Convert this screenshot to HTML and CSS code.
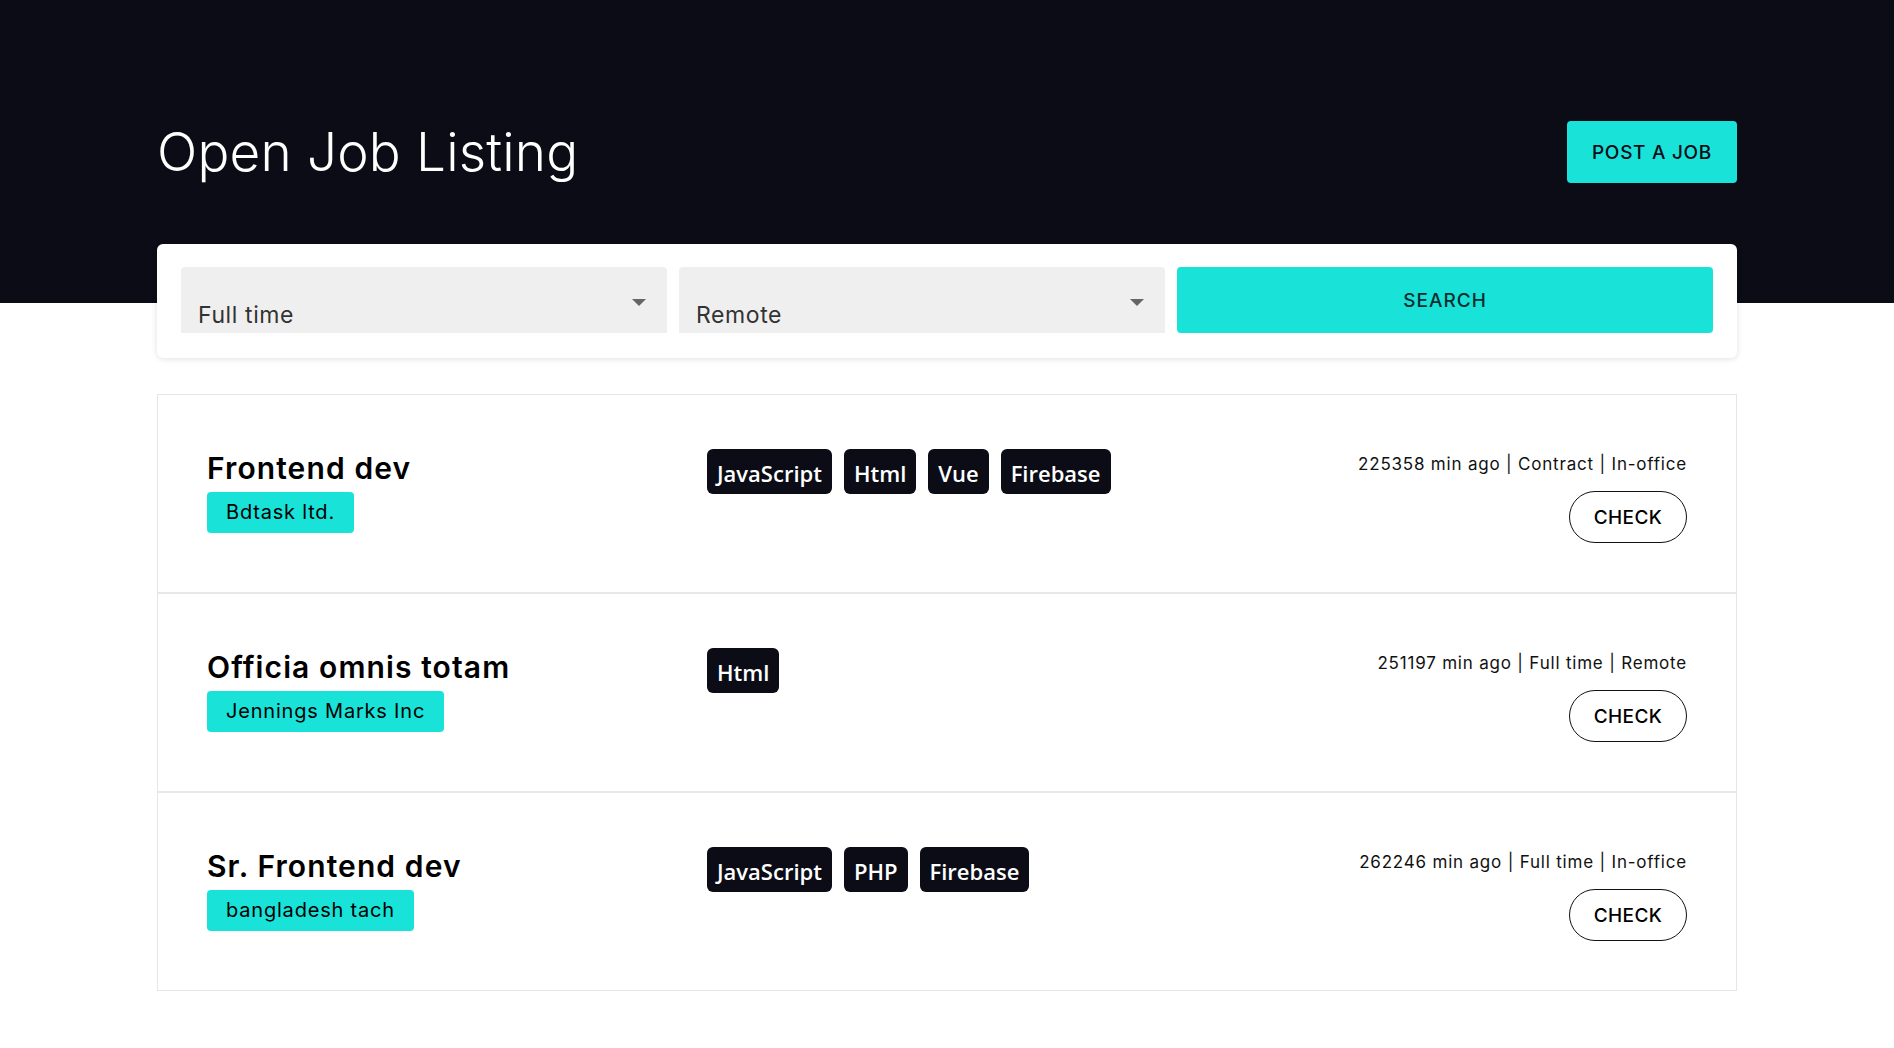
FILE: index.html
```html
<!DOCTYPE html>
<html>
<head>
<meta charset="utf-8">
<link rel="stylesheet" href="styles.css">
</head>
<body>
<div class="page">
  <div class="container">
    <header class="top">
      <h1 class="title">Open Job Listing</h1>
      <button class="post-btn">POST A JOB</button>
    </header>
    <section class="filters">
      <div class="select"><span>Full time</span><i class="caret"></i></div>
      <div class="select"><span>Remote</span><i class="caret"></i></div>
      <button class="search-btn">SEARCH</button>
    </section>
    <section class="list">
      <div class="row">
        <div class="info">
          <div class="job-title">Frontend dev</div>
          <div class="company">Bdtask ltd.</div>
        </div>
        <div class="skills">
          <span class="skill">JavaScript</span><span class="skill">Html</span><span class="skill">Vue</span><span class="skill">Firebase</span>
        </div>
        <div class="meta">
          <div class="meta-text">225358 min ago | Contract | In-office</div>
          <button class="check">CHECK</button>
        </div>
      </div>
      <div class="row">
        <div class="info">
          <div class="job-title">Officia omnis totam</div>
          <div class="company">Jennings Marks Inc</div>
        </div>
        <div class="skills">
          <span class="skill">Html</span>
        </div>
        <div class="meta">
          <div class="meta-text">251197 min ago | Full time | Remote</div>
          <button class="check">CHECK</button>
        </div>
      </div>
      <div class="row">
        <div class="info">
          <div class="job-title">Sr. Frontend dev</div>
          <div class="company">bangladesh tach</div>
        </div>
        <div class="skills">
          <span class="skill">JavaScript</span><span class="skill">PHP</span><span class="skill">Firebase</span>
        </div>
        <div class="meta">
          <div class="meta-text">262246 min ago | Full time | In-office</div>
          <button class="check">CHECK</button>
        </div>
      </div>
    </section>
  </div>
</div>
</body>
</html>
```
FILE: styles.css
```css
* { box-sizing: border-box; }
html, body { margin: 0; padding: 0; }
body {
  font-family: "Inter", "Liberation Sans", sans-serif;
  background: #fff;
  color: #000;
}
.page {
  background: linear-gradient(#0b0c16 0, #0b0c16 303px, #fff 303px);
  min-height: 1048px;
}
.container {
  width: 1580px;
  margin: 0 auto;
  padding-top: 121px;
}
.top {
  display: flex;
  justify-content: space-between;
  align-items: center;
  height: 62px;
}
.title {
  margin: 0;
  color: #fff;
  font-weight: 300;
  font-size: 53px;
  letter-spacing: 0.2px;
}
.post-btn {
  height: 62px;
  width: 170px;
  border: 0;
  border-radius: 4px;
  background: #19e2d8;
  color: #0b0c16;
  font-family: inherit;
  font-size: 19px;
  font-weight: 500;
  letter-spacing: 0.7px;
}
.filters {
  margin-top: 61px;
  background: #fff;
  border-radius: 6px;
  box-shadow: 0 1px 6px rgba(0,0,0,0.12);
  padding: 23px 24px 25px;
  display: grid;
  grid-template-columns: 486px 486px 1fr;
  gap: 12px;
}
.select {
  position: relative;
  height: 66px;
  background: #efefef;
  border-radius: 4px 4px 0 0;
  display: flex;
  align-items: flex-end;
  padding: 0 17px 4px;
  font-size: 23px;
  letter-spacing: 0.6px;
  color: #333;
}
.caret {
  position: absolute;
  right: 21px;
  top: 32px;
  width: 0;
  height: 0;
  border-left: 7px solid transparent;
  border-right: 7px solid transparent;
  border-top: 7px solid #666;
}
.search-btn {
  height: 66px;
  border: 0;
  border-radius: 4px;
  background: #19e2d8;
  color: #0e2d2e;
  font-family: inherit;
  font-size: 19px;
  font-weight: 500;
  letter-spacing: 1px;
}
.list {
  margin-top: 36px;
  border: 1px solid #e6e6e6;
}
.row {
  display: grid;
  grid-template-columns: 500px 1fr auto;
  padding: 50px 49px 49px;
  border-top: 2px solid #e8e8e8;
}
.row:first-child { border-top: 0; }
.job-title {
  font-size: 30px;
  font-weight: 600;
  line-height: 46px;
  letter-spacing: 1.1px;
}
.company {
  display: inline-block;
  background: #19e2d8;
  border-radius: 4px;
  font-size: 20px;
  line-height: 25px;
  letter-spacing: 0.8px;
  padding: 8px 19px;
  margin-top: 1px;
}
.skills {
  display: flex;
  gap: 12px;
  align-items: flex-start;
  padding-top: 4px;
}
.skill {
  background: #0b0c16;
  color: #fff;
  font-family: "Open Sans", sans-serif;
  font-weight: 600;
  font-size: 22px;
  line-height: 30px;
  padding: 9px 10px 6px;
  border-radius: 6px;
}
.meta {
  display: flex;
  flex-direction: column;
  align-items: flex-end;
}
.meta-text {
  margin-top: 6px;
  font-size: 17px;
  line-height: 26px;
  letter-spacing: 0.8px;
  color: #111;
}
.check {
  margin-top: 14px;
  width: 118px;
  height: 52px;
  border: 1px solid #111;
  border-radius: 26px;
  background: #fff;
  font-family: inherit;
  font-size: 19px;
  font-weight: 500;
  letter-spacing: 0.4px;
  color: #000;
}
```
